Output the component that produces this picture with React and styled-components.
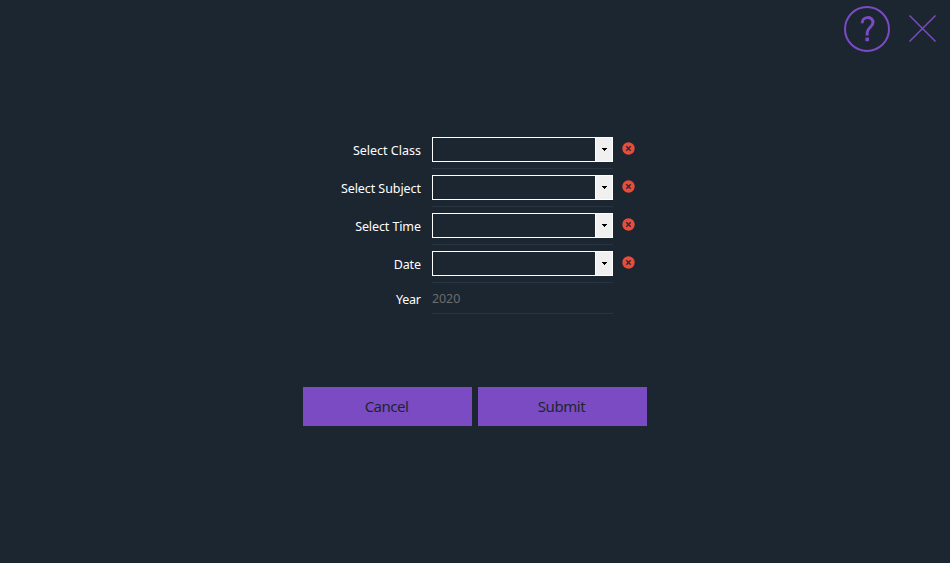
import React from "react";
import styled, { createGlobalStyle } from "styled-components";

const GlobalStyle = createGlobalStyle`
  body { margin: 0; background: #1b2631; font-family: "Noto Sans", "Open Sans", sans-serif; }
`;

const Page = styled.main`
  box-sizing: border-box;
  height: 563px;
  overflow: hidden;
  background: #1b2631;
`;

const TopBar = styled.header`
  display: flex;
  justify-content: flex-end;
  align-items: center;
  gap: 18px;
  height: 46px;
  padding: 6px 13px 0 0;
`;

const IconButton = styled.button`
  display: flex;
  padding: 0;
  border: 0;
  background: none;
`;

const CloseButton = styled(IconButton)`
  margin-bottom: 1px;
`;

const Form = styled.form`
  width: 344px;
  margin: 85px auto 0;
`;

const Row = styled.div`
  display: grid;
  grid-template-columns: 118px 181px 13px;
  column-gap: 11px;
  height: ${(p) => p.$height}px;
`;

const Label = styled.label`
  justify-self: end;
  height: 18px;
  margin-top: ${(p) => p.$top}px;
  margin-right: ${(p) => -p.$spacing}px;
  color: #fff;
  font-size: 12.5px;
  line-height: 18px;
  letter-spacing: ${(p) => p.$spacing}px;
  white-space: nowrap;
`;

const Field = styled.div`
  box-sizing: border-box;
  height: ${(p) => p.$height}px;
  border-bottom: 1px solid #273543;
`;

const Combo = styled.div`
  box-sizing: border-box;
  display: flex;
  justify-content: flex-end;
  height: 25px;
  border: 1px solid #fff;
`;

const DropButton = styled.div`
  box-sizing: border-box;
  display: flex;
  align-items: center;
  justify-content: center;
  width: 17px;
  border-left: 1px solid #fff;
  background: #f0f0f0;
`;

const ErrorSlot = styled.div`
  margin: 5px 0 0 -2px;
  height: 13px;
  svg { display: block; }
`;

const YearText = styled.div`
  padding-top: 1px;
  color: #6d6d6d;
  font-size: 12.5px;
  line-height: 18px;
  letter-spacing: -0.1px;
`;

const Actions = styled.div`
  display: flex;
  gap: 6px;
  margin-top: 73px;
`;

const ActionButton = styled.button`
  width: 169px;
  height: 39px;
  padding: 0 2px 0 0;
  border: 0;
  background: #7b4bc4;
  color: #1b2631;
  font: 15px/39px "Noto Sans", "Open Sans", sans-serif;
  letter-spacing: ${(p) => p.$spacing}px;
`;

const HelpIcon = () => (
  <svg width="46" height="46" viewBox="0 0 46 46" fill="none" stroke="#7b4bc4">
    <circle cx="23" cy="23" r="22" strokeWidth="2" />
    <path d="M18.2 17.2 C18 9.9 29 9.9 29 16.4 C29 21 23.2 21.6 23.2 26.6 V29.5" strokeWidth="3" />
    <rect x="21.4" y="31.6" width="3.6" height="3.6" fill="#7b4bc4" stroke="none" />
  </svg>
);

const CloseIcon = () => (
  <svg width="29" height="29" viewBox="0 0 29 29" fill="none" stroke="#7b4bc4" strokeWidth="1.5">
    <path d="M1.5 1.5 L27.5 27.5 M27.5 1.5 L1.5 27.5" />
  </svg>
);

const ArrowIcon = () => (
  <svg width="5" height="3" viewBox="0 0 5 3" shapeRendering="crispEdges">
    <path d="M0 0H5V1H4V2H3V3H2V2H1V1H0Z" fill="#000" />
  </svg>
);

const ErrorIcon = () => (
  <svg width="13" height="13" viewBox="0 0 13 13">
    <circle cx="6.5" cy="6.5" r="6.2" fill="#e74c3c" />
    <path d="M4.3 4.3 L8.7 8.7 M8.7 4.3 L4.3 8.7" stroke="#2b2b33" strokeWidth="1.4" />
  </svg>
);

const fields = [
  { label: "Select Class", spacing: 0 },
  { label: "Select Subject", spacing: -0.07 },
  { label: "Select Time", spacing: -0.1 },
  { label: "Date", spacing: -0.15 },
];

export default function App() {
  return (
    <Page>
      <GlobalStyle />
      <TopBar>
        <IconButton aria-label="Help"><HelpIcon /></IconButton>
        <CloseButton aria-label="Close"><CloseIcon /></CloseButton>
      </TopBar>
      <Form>
        {fields.map((f) => (
          <Row key={f.label} $height={38}>
            <Label $top={5} $spacing={f.spacing}>{f.label}</Label>
            <Field $height={32}>
              <Combo><DropButton><ArrowIcon /></DropButton></Combo>
            </Field>
            <ErrorSlot><ErrorIcon /></ErrorSlot>
          </Row>
        ))}
        <Row $height={25}>
          <Label $top={2} $spacing={-0.2}>Year</Label>
          <Field $height={25}><YearText>2020</YearText></Field>
        </Row>
        <Actions>
          <ActionButton type="button" $spacing={-0.5}>Cancel</ActionButton>
          <ActionButton type="button" $spacing={-0.4}>Submit</ActionButton>
        </Actions>
      </Form>
    </Page>
  );
}
